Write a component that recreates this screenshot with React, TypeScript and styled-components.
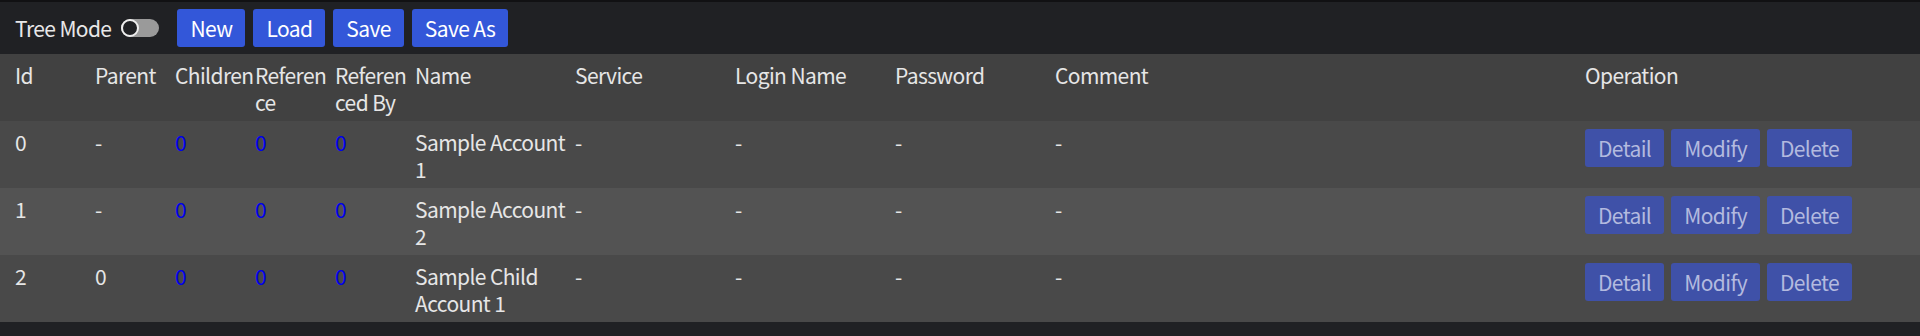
import styled, { createGlobalStyle } from "styled-components"

const GlobalStyle = createGlobalStyle`
  body {
    margin: 0;
    background: #202124;
    color: #e6e6e6;
    font-family: "Noto Sans CJK SC", "Source Sans Pro", "Noto Sans", sans-serif;
    font-size: 21px;
    letter-spacing: -0.6px;
  }
`

interface Account {
  id: number
  parent: string
  name: string
}

const accounts: Account[] = [
  { id: 0, parent: "-", name: "Sample Account 1" },
  { id: 1, parent: "-", name: "Sample Account 2" },
  { id: 2, parent: "0", name: "Sample Child Account 1" },
]

const headers = [
  "Id",
  "Parent",
  "Children",
  "Reference",
  "Referenced By",
  "Name",
  "Service",
  "Login Name",
  "Password",
  "Comment",
  "Operation",
]

export default function App() {
  return (
    <>
      <GlobalStyle />
      <Page>
        <Toolbar>
          <ToggleLabel>
            Tree Mode
            <SwitchTrack role="switch" aria-checked={false}>
              <SwitchKnob />
            </SwitchTrack>
          </ToggleLabel>
          <ToolButton>New</ToolButton>
          <ToolButton>Load</ToolButton>
          <ToolButton>Save</ToolButton>
          <ToolButton>Save As</ToolButton>
        </Toolbar>

        <Table>
          <Row $tone="head">
            {headers.map((h) => (
              <Cell key={h}>{h}</Cell>
            ))}
          </Row>
          {accounts.map((acc, i) => (
            <Row key={acc.id} $tone={i % 2 === 0 ? "even" : "odd"}>
              <Cell>{acc.id}</Cell>
              <Cell>{acc.parent}</Cell>
              <Cell>
                <CountLink href="#">0</CountLink>
              </Cell>
              <Cell>
                <CountLink href="#">0</CountLink>
              </Cell>
              <Cell>
                <CountLink href="#">0</CountLink>
              </Cell>
              <Cell>{acc.name}</Cell>
              <Cell>-</Cell>
              <Cell>-</Cell>
              <Cell>-</Cell>
              <Cell>-</Cell>
              <Operations>
                <OpButton>Detail</OpButton>
                <OpButton>Modify</OpButton>
                <OpButton>Delete</OpButton>
              </Operations>
            </Row>
          ))}
        </Table>
      </Page>
    </>
  )
}

const Page = styled.div`
  display: flex;
  flex-direction: column;
  border-top: 2px solid #111113;
`

const Toolbar = styled.div`
  display: flex;
  align-items: center;
  gap: 8px;
  padding: 7px 15px;
  background: #202124;
`

const ToggleLabel = styled.label`
  display: flex;
  align-items: center;
  gap: 10px;
  margin-right: 10px;
  line-height: 28px;
  color: #e8e8e8;
`

const SwitchTrack = styled.span`
  position: relative;
  display: inline-block;
  width: 38px;
  height: 18px;
  border-radius: 9px;
  background: #9a9a9a;
`

const SwitchKnob = styled.span`
  position: absolute;
  left: 0;
  top: 0;
  box-sizing: border-box;
  width: 18px;
  height: 18px;
  border-radius: 50%;
  background: #202124;
  border: 2px solid #eeeeee;
`

const ToolButton = styled.button`
  padding: 5px 13px;
  border: none;
  border-radius: 3px;
  background: #3357d9;
  color: #ffffff;
  font-family: inherit;
  font-size: 21px;
  letter-spacing: -0.6px;
  line-height: 28px;
  cursor: pointer;
`

const Table = styled.div`
  display: flex;
  flex-direction: column;
`

const rowColors = {
  head: "#414141",
  even: "#494949",
  odd: "#535353",
}

const Row = styled.div<{ $tone: keyof typeof rowColors }>`
  display: grid;
  grid-template-columns: repeat(5, 80px) repeat(4, 160px) 1fr 320px;
  padding: 8px 15px 5px;
  height: 67px;
  box-sizing: border-box;
  background: ${(p) => rowColors[p.$tone]};
  line-height: 27px;
`

const Cell = styled.div`
  min-width: 0;
  overflow-wrap: anywhere;
`

const CountLink = styled.a`
  color: #0000ee;
  text-decoration: none;
`

const Operations = styled.div`
  display: flex;
  align-items: flex-start;
  gap: 7px;
`

const OpButton = styled.button`
  padding: 5px 13px;
  border: none;
  border-radius: 3px;
  background: #3f51a8;
  color: #b3badf;
  font-family: inherit;
  font-size: 21px;
  letter-spacing: -0.6px;
  line-height: 28px;
  cursor: pointer;
`
